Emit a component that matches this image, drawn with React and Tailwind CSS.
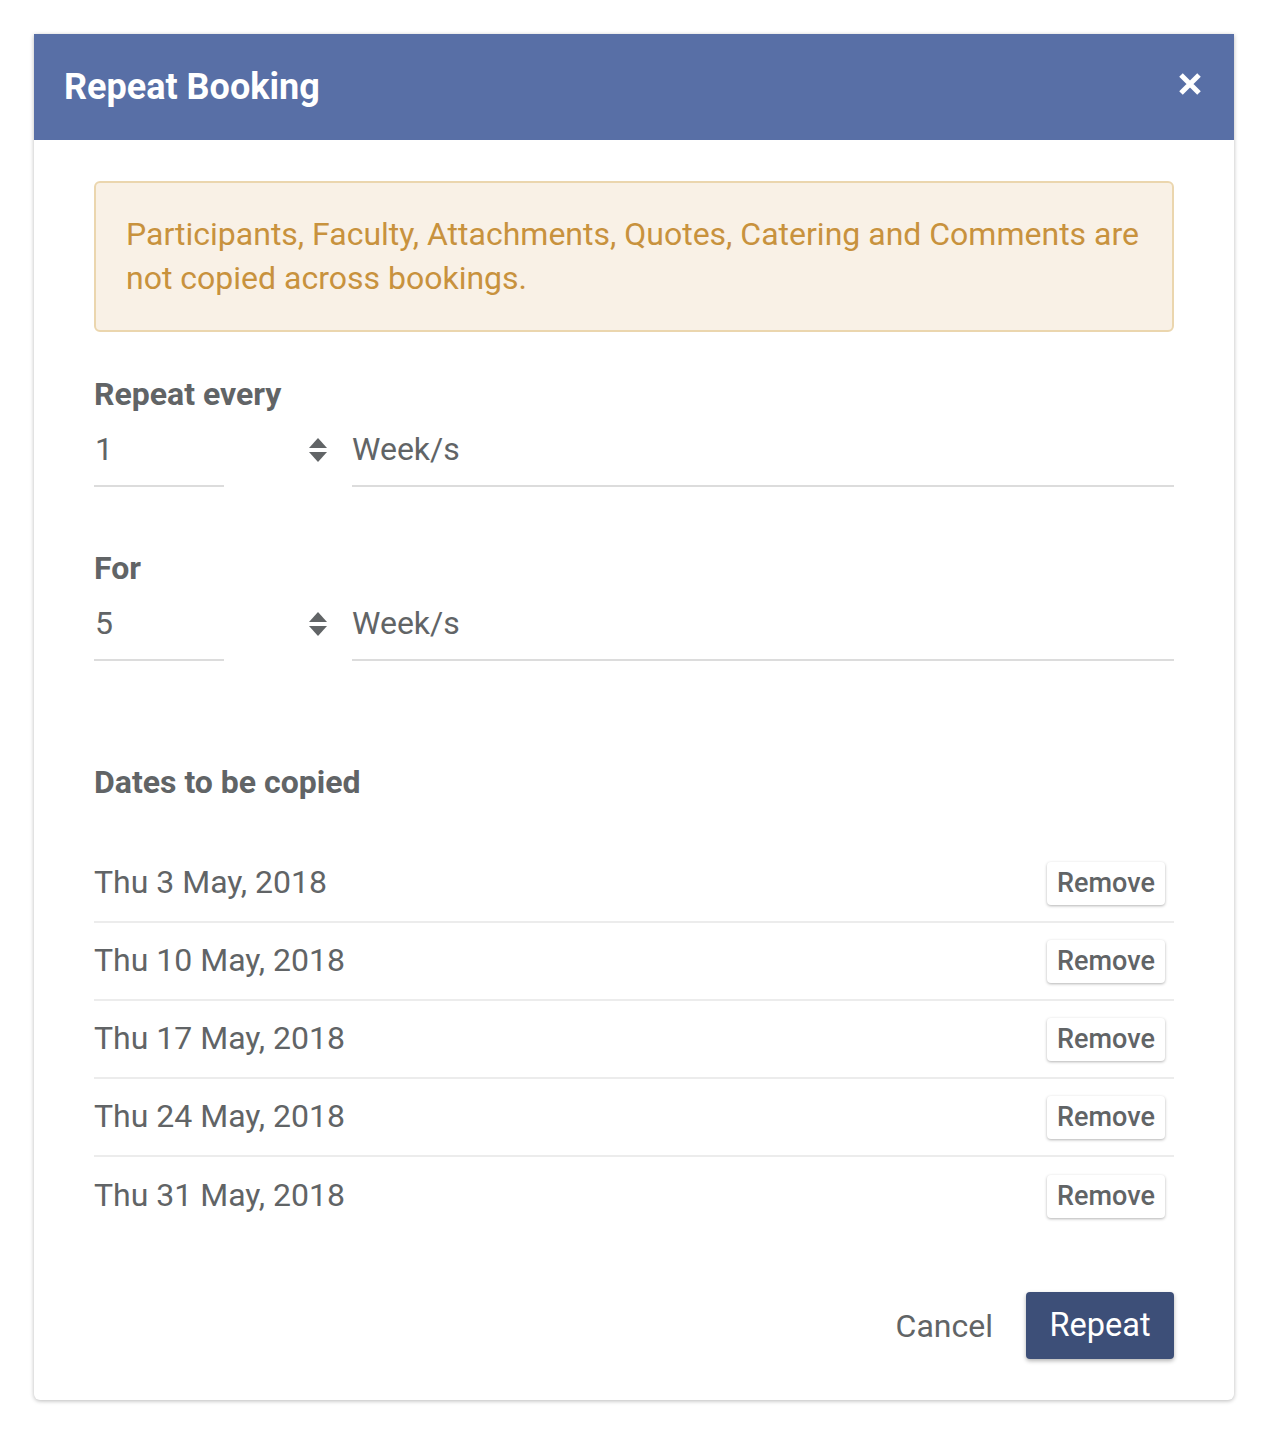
import React from "react";

const dates = ["Thu 3 May, 2018", "Thu 10 May, 2018", "Thu 17 May, 2018", "Thu 24 May, 2018", "Thu 31 May, 2018"];

function Spinner() {
  return (
    <svg width="20" height="26" viewBox="0 0 20 26" className="shrink-0">
      <polygon points="10,1 19,11 1,11" fill="#616466" />
      <polygon points="1,15 19,15 10,25" fill="#616466" />
    </svg>
  );
}

function NumberField({ label, value }) {
  return (
    <div className="flex flex-col">
      <div className="h-[30px] flex items-center text-[32px] font-bold text-[#616466] leading-none">{label}</div>
      <div className="flex items-end mt-[8px]">
        <div className="w-[130px] h-[70px] border-b-2 border-[#dcdcdc] flex items-center pl-[1px] text-[32px] text-[#616466] pb-[4px]">{value}</div>
        <div className="w-[128px] h-[70px] flex items-center pl-[84px] pb-[4px]">
          <Spinner />
        </div>
        <div className="flex-1 h-[70px] border-b-2 border-[#dcdcdc] flex items-center text-[32px] text-[#616466] pb-[4px]">Week/s</div>
      </div>
    </div>
  );
}

export default function App() {
  return (
    <div className="bg-white min-h-[1440px] pt-[34px] px-[34px] font-['Roboto',sans-serif]">
      <div className="w-[1200px] h-[1366px] bg-white rounded-b-[6px] shadow-[0_1px_4px_rgba(0,0,0,0.28)] flex flex-col">
        <div className="h-[106px] bg-[#586fa6] flex items-center justify-between pl-[30px] pr-[30px]">
          <div className="text-white text-[36px] font-bold leading-none">Repeat Booking</div>
          <svg width="26" height="26" viewBox="0 0 26 26" className="mr-[1px] mb-[6px]">
            <path d="M4 4 L22 22 M22 4 L4 22" stroke="white" strokeWidth="5" strokeLinecap="butt" />
          </svg>
        </div>
        <div className="px-[60px] pt-[41px] flex flex-col flex-1">
          <div className="h-[151px] rounded-[6px] border-2 border-[#ebd6ae] bg-[#f9f1e6] pl-[30px] pr-[20px] flex items-center">
            <p className="text-[32px] leading-[44px] text-[#c8923d] pb-[2px]">
              Participants, Faculty, Attachments, Quotes, Catering and Comments are not copied across bookings.
            </p>
          </div>
          <div className="mt-[47px]">
            <NumberField label="Repeat every" value="1" />
          </div>
          <div className="mt-[66px]">
            <NumberField label="For" value="5" />
          </div>
          <div className="mt-[106px] h-[30px] flex items-center text-[32px] font-bold text-[#616466] leading-none">Dates to be copied</div>
          <div className="mt-[48px] flex flex-col">
            {dates.map((d, i) => (
              <div key={d} className={"h-[78px] flex items-center justify-between " + (i < dates.length - 1 ? "border-b-2 border-[#ececec]" : "")}>
                <span className="text-[32px] text-[#616466] leading-none pb-[2px]">{d}</span>
                <button className="h-[43px] w-[118px] mr-[9px] rounded-[4px] bg-white shadow-[0_1px_3px_rgba(0,0,0,0.3)] text-[27px] font-medium text-[#616466] leading-none flex items-center justify-center">Remove</button>
              </div>
            ))}
          </div>
          <div className="mt-[57px] flex justify-end items-center">
            <button className="text-[32px] text-[#616466] leading-none mr-[33px]">Cancel</button>
            <button className="w-[148px] h-[67px] rounded-[4px] bg-[#3d4f78] text-white text-[32.5px] leading-none shadow-[0_2px_4px_rgba(0,0,0,0.3)] flex items-center justify-center">Repeat</button>
          </div>
        </div>
      </div>
    </div>
  );
}
